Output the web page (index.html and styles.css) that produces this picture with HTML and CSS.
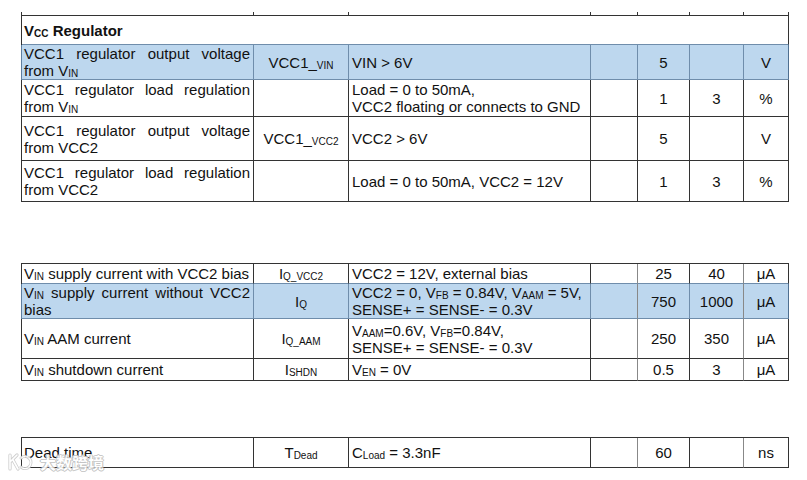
FILE: index.html
```html
<!DOCTYPE html>
<html>
<head>
<meta charset="utf-8">
<link rel="stylesheet" href="styles.css">
</head>
<body>
<div class="sheet">
  <div class="tbl t1">
    <div class="row stub"><div class="c"></div><div class="c"></div><div class="c"></div><div class="c"></div><div class="c"></div><div class="c"></div><div class="c"></div></div>
    <div class="row first h29"><div class="c span bold"><span>V<span class="sub">CC</span> Regulator</span></div></div>
    <div class="row hl h35">
      <div class="c j"><span>VCC1 regulator output voltage from V<span class="sub">IN</span></span></div>
      <div class="c mid"><span>VCC1_<span class="sub">VIN</span></span></div>
      <div class="c cond"><span>VIN &gt; 6V</span></div>
      <div class="c"></div>
      <div class="c mid"><span>5</span></div>
      <div class="c"></div>
      <div class="c mid"><span>V</span></div>
    </div>
    <div class="row h37">
      <div class="c j"><span>VCC1 regulator load regulation from V<span class="sub">IN</span></span></div>
      <div class="c"></div>
      <div class="c cond"><span>Load = 0 to 50mA,<br>VCC2 floating or connects to GND</span></div>
      <div class="c"></div>
      <div class="c mid"><span>1</span></div>
      <div class="c mid"><span>3</span></div>
      <div class="c mid"><span>%</span></div>
    </div>
    <div class="row h44">
      <div class="c j"><span>VCC1 regulator output voltage from VCC2</span></div>
      <div class="c mid"><span>VCC1_<span class="sub">VCC2</span></span></div>
      <div class="c cond"><span>VCC2 &gt; 6V</span></div>
      <div class="c"></div>
      <div class="c mid"><span>5</span></div>
      <div class="c"></div>
      <div class="c mid"><span>V</span></div>
    </div>
    <div class="row h41">
      <div class="c j"><span>VCC1 regulator load regulation from VCC2</span></div>
      <div class="c"></div>
      <div class="c cond"><span>Load = 0 to 50mA, VCC2 = 12V</span></div>
      <div class="c"></div>
      <div class="c mid"><span>1</span></div>
      <div class="c mid"><span>3</span></div>
      <div class="c mid"><span>%</span></div>
    </div>
  </div>

  <div class="tbl t2 soft">
    <div class="row first h20">
      <div class="c nowrap"><span>V<span class="sub">IN</span> supply current with VCC2 bias</span></div>
      <div class="c mid"><span>I<span class="sub">Q_VCC2</span></span></div>
      <div class="c cond"><span>VCC2 = 12V, external bias</span></div>
      <div class="c"></div>
      <div class="c mid"><span>25</span></div>
      <div class="c mid"><span>40</span></div>
      <div class="c mid"><span>μA</span></div>
    </div>
    <div class="row hl h35">
      <div class="c j"><span>V<span class="sub">IN</span> supply current without VCC2 bias</span></div>
      <div class="c mid"><span>I<span class="sub">Q</span></span></div>
      <div class="c cond"><span>VCC2 = 0, V<span class="sub">FB</span> = 0.84V, V<span class="sub">AAM</span> = 5V,<br>SENSE+ = SENSE- = 0.3V</span></div>
      <div class="c"></div>
      <div class="c mid"><span>750</span></div>
      <div class="c mid"><span>1000</span></div>
      <div class="c mid"><span>μA</span></div>
    </div>
    <div class="row h40">
      <div class="c"><span>V<span class="sub">IN</span> AAM current</span></div>
      <div class="c mid"><span>I<span class="sub">Q_AAM</span></span></div>
      <div class="c cond"><span>V<span class="sub">AAM</span>=0.6V, V<span class="sub">FB</span>=0.84V,<br>SENSE+ = SENSE- = 0.3V</span></div>
      <div class="c"></div>
      <div class="c mid"><span>250</span></div>
      <div class="c mid"><span>350</span></div>
      <div class="c mid"><span>μA</span></div>
    </div>
    <div class="row h22">
      <div class="c"><span>V<span class="sub">IN</span> shutdown current</span></div>
      <div class="c mid"><span>I<span class="sub">SHDN</span></span></div>
      <div class="c cond"><span>V<span class="sub">EN</span> = 0V</span></div>
      <div class="c"></div>
      <div class="c mid"><span>0.5</span></div>
      <div class="c mid"><span>3</span></div>
      <div class="c mid"><span>μA</span></div>
    </div>
  </div>

  <div class="tbl t3 soft">
    <div class="row first h30">
      <div class="c"><span>Dead time</span></div>
      <div class="c mid"><span>T<span class="sub">Dead</span></span></div>
      <div class="c cond"><span>C<span class="sub">Load</span> = 3.3nF</span></div>
      <div class="c"></div>
      <div class="c mid"><span>60</span></div>
      <div class="c"></div>
      <div class="c mid"><span>ns</span></div>
    </div>
  </div>

  <div class="wm">
    <svg class="wm-logo" width="30" height="20" viewBox="0 0 30 20">
      <path d="M4 3 L4 17 M4 10 L11 3 M7 8 L12 17" fill="none" stroke="#c8c8c8" stroke-width="3.2" stroke-linecap="round"/>
      <path d="M4 3 L4 17 M4 10 L11 3 M7 8 L12 17" fill="none" stroke="#fff" stroke-width="1.6" stroke-linecap="round"/>
      <path d="M15 6 A6 6 0 1 1 15 15" fill="none" stroke="#c8c8c8" stroke-width="3" stroke-linecap="round"/>
      <path d="M15 6 A6 6 0 1 1 15 15" fill="none" stroke="#fff" stroke-width="1.4" stroke-linecap="round"/>
    </svg>
    <span class="wm-text">大数跨境</span>
  </div>
</div>
</body>
</html>
```

FILE: styles.css
```css
html, body {
  margin: 0;
  padding: 0;
  background: #fff;
}

.sheet {
  position: relative;
  width: 807px;
  height: 480px;
  padding-top: 12px;
  box-sizing: border-box;
  font-family: "Liberation Sans", Arial, sans-serif;
  font-size: 15px;
  color: #111;
}

.tbl {
  margin-left: 21px;
  width: 768px;
}

.t2 { margin-top: 61px; }
.t3 { margin-top: 56px; }

.row {
  display: grid;
  grid-template-columns: 232px 95px 242px 47px 52px 54px 45px;
  border-left: 1px solid #333;
  box-sizing: border-box;
}

.row.first {
  border-top: 1px solid #333;
}

.c {
  border-right: 1px solid #333;
  border-bottom: 1px solid #333;
  box-sizing: border-box;
  display: flex;
  flex-direction: column;
  justify-content: center;
  padding: 0 3px 0 2px;
  line-height: 17px;
}

.c > span {
  display: block;
}

.c.span {
  grid-column: 1 / -1;
}

.bold { font-weight: bold; }

.c.j { text-align: justify; }

.c.nowrap { white-space: nowrap; }

.c.mid {
  text-align: center;
  padding: 0;
}

.c.cond {
  padding-left: 3px;
  white-space: nowrap;
}

.sub {
  font-size: 10px;
  vertical-align: -1px;
  line-height: 0;
}

.stub { grid-auto-rows: 3px; }
.stub .c { border-bottom: none; }

.h20 { grid-auto-rows: 20px; }
.h22 { grid-auto-rows: 22px; }
.h29 { grid-auto-rows: 29px; }
.h30 { grid-auto-rows: 30px; }
.h35 { grid-auto-rows: 35px; }
.h37 { grid-auto-rows: 37px; }
.h40 { grid-auto-rows: 40px; }
.h41 { grid-auto-rows: 41px; }
.h44 { grid-auto-rows: 44px; }

/* highlighted rows */
.row.hl {
  border-left-color: #5f7f9f;
}
.row.hl .c {
  background: #bdd7ee;
  border-color: #6f8dab;
}
.row.hl .c:last-child {
  border-right-color: #4f6f90;
}
.row:has(+ .hl) .c {
  border-bottom-color: #6f8dab;
}

/* lighter column rules in the lower tables */
.soft .c:nth-child(4),
.soft .c:nth-child(6) {
  border-right-color: #888;
}

/* watermark overlay */
.wm {
  position: absolute;
  left: 6px;
  top: 452px;
  display: flex;
  align-items: center;
  gap: 4px;
  opacity: 0.9;
}

.wm-text {
  font-family: "Noto Sans CJK SC", sans-serif;
  font-size: 16px;
  font-weight: bold;
  line-height: 20px;
  color: #fff;
  text-shadow: 0 0 1px #aaa, 0 0 1px #aaa, 1px 0 0 #ccc, -1px 0 0 #ccc, 0 1px 0 #ccc, 0 -1px 0 #ccc;
}
```
